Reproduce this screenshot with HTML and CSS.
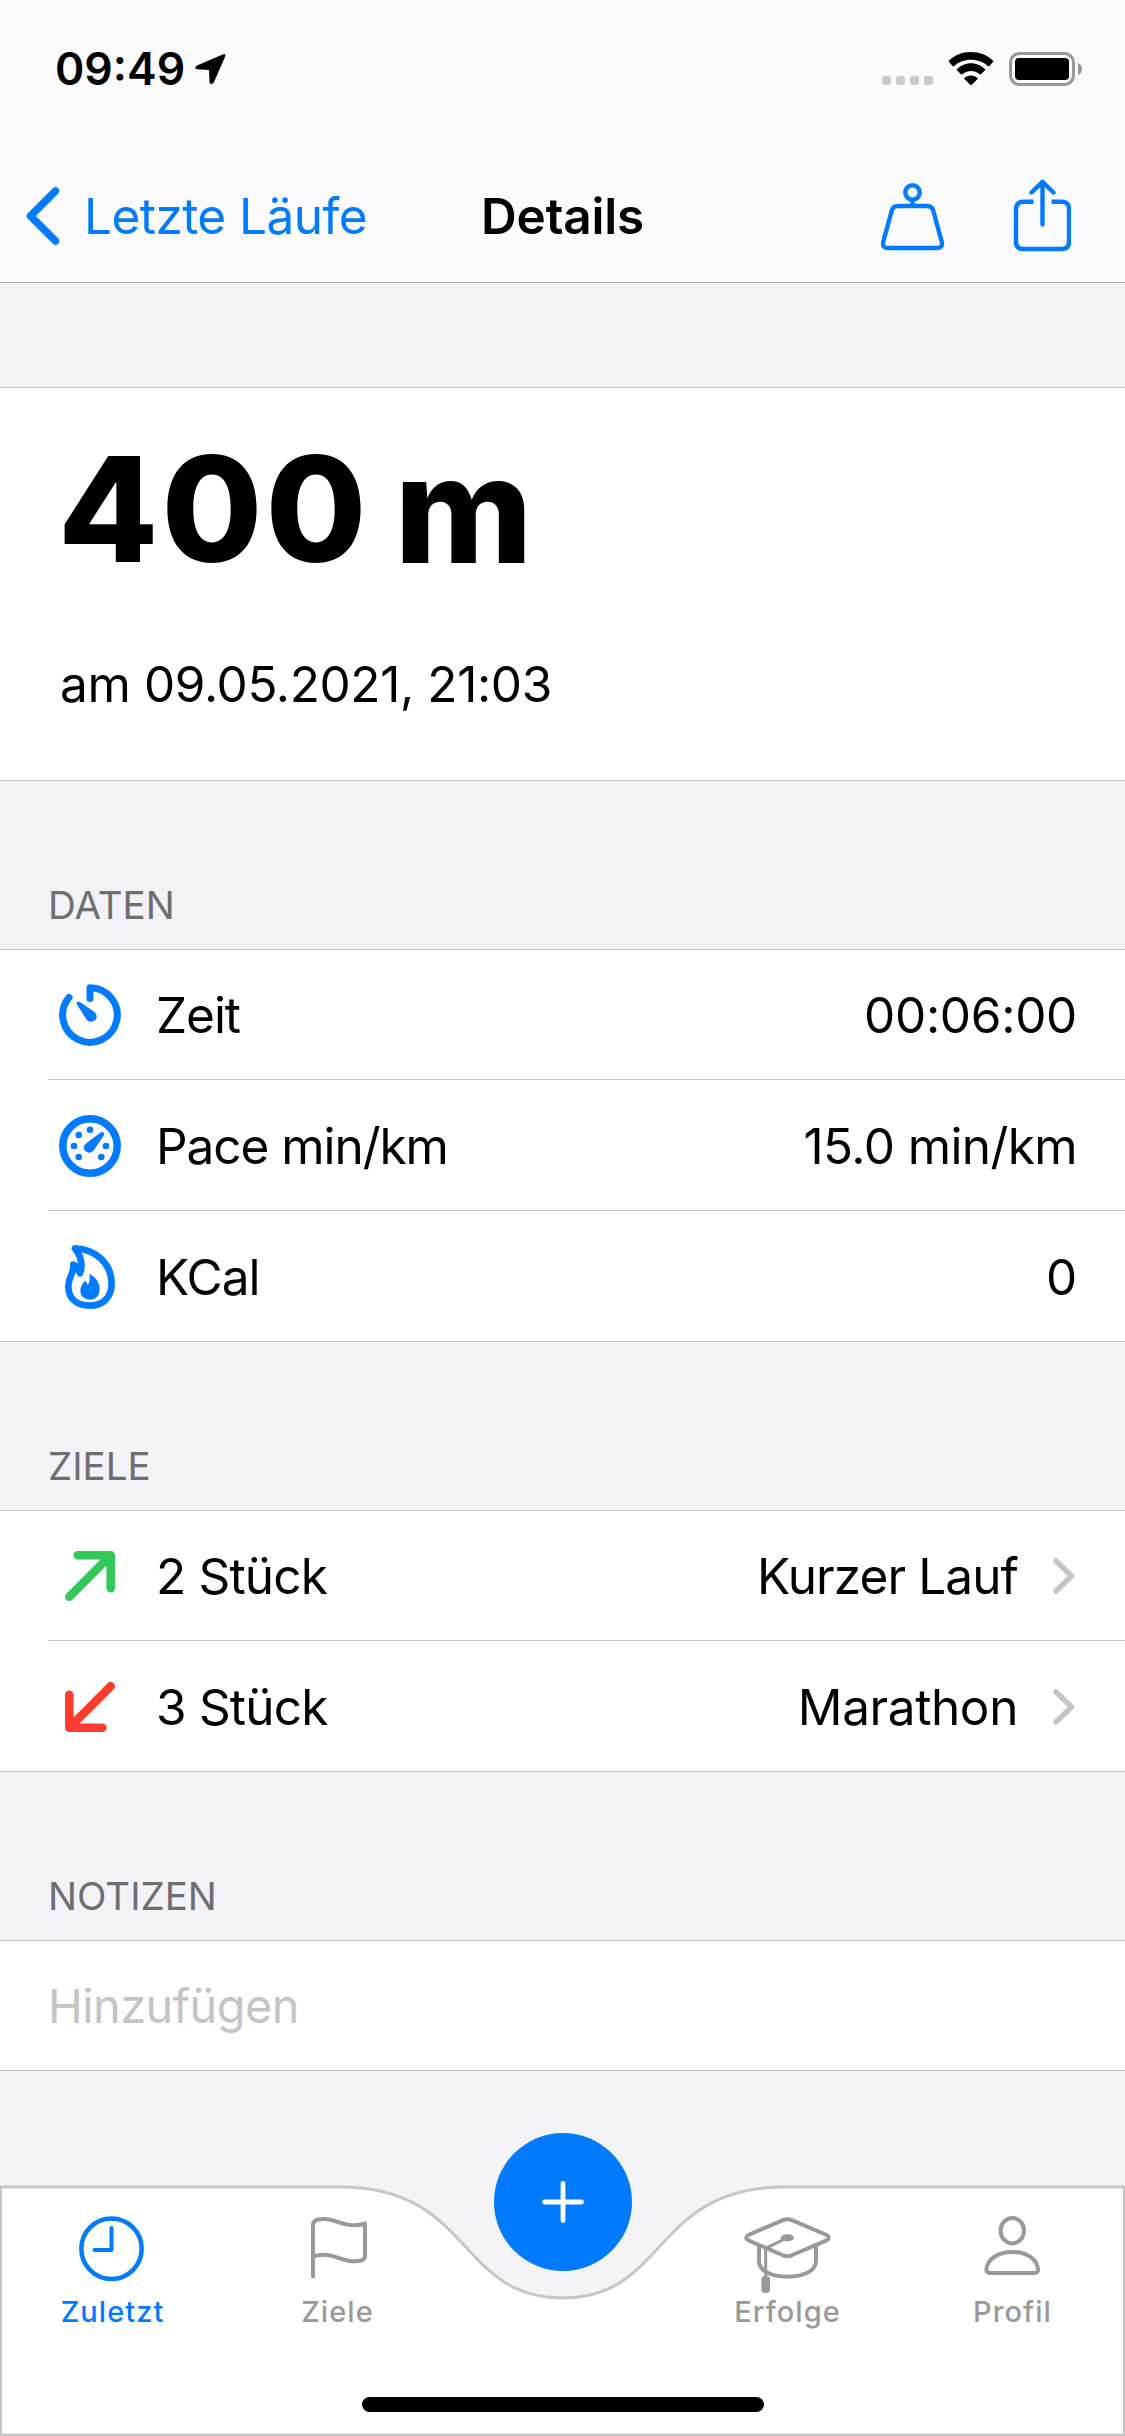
FILE: index.html
```html
<!DOCTYPE html>
<html lang="de">
<head>
<meta charset="utf-8">
<title>Details</title>
<link rel="stylesheet" href="styles.css">
</head>
<body>
<div class="screen">
  <header class="header">
    <div class="status">
      <div class="status-left">
        <span class="time">09:49</span>
        <svg class="location" width="32" height="32" viewBox="0 0 32 32"><path d="M30.5 1 Q32 1.500 31 4 L20 29 Q18.800 31.500 17 31 Q15.500 30.500 15.500 29 L15 17 L3 16.300 Q1.300 16 1.300 14.800 Q1.200 13.500 3 12.600 L28 1.700 Q29.500 1 30.500 1Z"/></svg>
      </div>
      <div class="status-right">
        <div class="cell"><i></i><i></i><i></i><i></i></div>
        <svg class="wifi" width="46" height="34" viewBox="0 0 46 34">
          <path d="M.5 9.300 C12-3 34-3 45.500 9.300 L41.500 14 Q40.700 14.600 40 14 C31 5.500 15 5.500 6 14 Q5.300 14.600 4.500 14Z"/>
          <path d="M8.500 17.700 C16 9 30 9 37.500 17.700 L33 22.200 Q32.300 22.800 31.500 22.100 C26.500 18 19.500 18 14.500 22.100 Q13.700 22.800 13 22.200Z"/>
          <path d="M16.400 26 C19.500 22.600 26.500 22.600 29.600 26 Q30 26.500 29.600 27 L23.700 32.700 Q23 33.400 22.300 32.700 L16.400 27 Q16 26.500 16.400 26Z"/>
        </svg>
        <svg class="battery" width="74" height="34" viewBox="0 0 74 34">
          <rect x="1.500" y="1.500" width="63" height="31" rx="9" fill="none" stroke="#98989a" stroke-width="3"/>
          <rect x="6" y="6" width="54" height="22" rx="4"/>
          <path d="M69 11 Q73 12.500 73 17 Q73 21.500 69 23Z" fill="#98989a"/>
        </svg>
      </div>
    </div>
    <nav class="nav">
      <a class="back">
        <svg width="34" height="58" viewBox="0 0 34 58"><path d="M29.500 4 L4.500 29 L29.500 54"/></svg>
        <span>Letzte Läufe</span>
      </a>
      <h1 class="nav-title">Details</h1>
      <div class="actions">
        <svg width="64" height="72" viewBox="0 0 64 72">
          <circle cx="31.500" cy="12.500" r="7.200"/>
          <path d="M31.500 20 V26 M17 26 H46 Q51 26 52.200 30.500 L60.800 62 Q61.800 68 56.500 68 H6.500 Q1.200 68 2.200 62 L10.800 30.500 Q12 26 17 26Z"/>
        </svg>
        <svg width="58" height="74" viewBox="0 0 58 74">
          <path d="M20.500 22.700 H10.500 Q3 22.700 3 30 V63 Q3 70 10.500 70 H48.500 Q56 70 56 63 V30 Q56 22.700 48.500 22.700 H38.500"/>
          <path d="M29.500 3 V45.500 M18.500 13.500 L29.500 2.800 L40.500 13.500" stroke-linecap="round"/>
        </svg>
      </div>
    </nav>
  </header>

  <main class="content">
    <section class="card summary">
      <p class="distance"><span class="number">400</span><span class="unit">m</span></p>
      <p class="date">am 09.05.2021, 21:03</p>
    </section>

    <h2 class="section-title">DATEN</h2>
    <section class="card">
      <div class="row">
        <div class="slot">
          <svg class="blue" width="62" height="62" viewBox="-31 -31 62 62">
            <path d="M0 -16.500 V-27.300 A27.300 27.300 0 1 1 -21 -17.500" fill="none" stroke="currentColor" stroke-width="7" stroke-linecap="round" stroke-linejoin="round"/>
            <path d="M-13.700 -11.500 Q-12.500 -14.600 -10 -13 L4.500 -3 Q8 0.500 6 4 Q3.500 7.500 -0.500 6.500 Q-2.500 6 -3.500 4.500Z" fill="currentColor"/>
          </svg>
        </div>
        <span class="label tight">Zeit</span><span class="value">00:06:00</span>
      </div>
      <div class="row">
        <div class="slot">
          <svg class="blue" width="62" height="62" viewBox="-31 -31 62 62">
            <circle r="27.200" fill="none" stroke="currentColor" stroke-width="7.500"/>
            <g fill="currentColor"><circle cy="-16.200" r="3.300"/><circle cx="-11.300" cy="-11" r="3.300"/><circle cx="-16" r="3.300"/><circle cx="-11.300" cy="11" r="3.300"/><circle cx="11.300" cy="11" r="3.300"/><circle cx="16" r="3.300"/>
            <path d="M10 -13 Q13 -15.200 14.200 -12.500 Q14.500 -11.500 13.800 -10.500 L4 4 Q1.500 7.300 -2 6.500 Q-6.500 5 -6.300 1 Q-6 -1 -4 -2.500Z"/></g>
          </svg>
        </div>
        <span class="label tight">Pace min/km</span><span class="value pace">15.0 min/km</span>
      </div>
      <div class="row">
        <div class="slot">
          <svg class="blue" width="50" height="64" viewBox="45 42 150 192">
            <path d="M75 52 C140 54 185 102 185 157 C185 201 157 224 120 224 C80 224 55 203 55 165 C55 137 73 128 70 101 Q84 107 90 127 Q103 88 75 52Z" fill="none" stroke="currentColor" stroke-width="20" stroke-linejoin="round"/>
            <path d="M118 128 Q149 145 149 174 Q148 205 120 206 Q91 205 91 178 Q91 165 105 149 Q112 154 113 163 Q122 149 118 128Z" fill="currentColor"/>
          </svg>
        </div>
        <span class="label tight">KCal</span><span class="value">0</span>
      </div>
    </section>

    <h2 class="section-title">ZIELE</h2>
    <section class="card">
      <div class="row">
        <div class="slot"><svg class="arrow up" width="50" height="50" viewBox="0 0 50 50"><path d="M4.300 45.700 L45.700 4.300 M12.700 4.300 H45.700 V37.300"/></svg></div>
        <span class="label">2 Stück</span><span class="value short">Kurzer Lauf</span>
        <svg class="chevron" width="24" height="36" viewBox="0 0 24 36"><path d="M3 3 L18.500 18 L3 33"/></svg>
      </div>
      <div class="row">
        <div class="slot"><svg class="arrow down" width="50" height="50" viewBox="0 0 50 50"><path d="M45.700 4.300 L4.300 45.700 M4.300 12.700 V45.700 H37.300"/></svg></div>
        <span class="label">3 Stück</span><span class="value marathon">Marathon</span>
        <svg class="chevron" width="24" height="36" viewBox="0 0 24 36"><path d="M3 3 L18.500 18 L3 33"/></svg>
      </div>
    </section>

    <h2 class="section-title">NOTIZEN</h2>
    <section class="card">
      <div class="row"><span class="placeholder">Hinzufügen</span></div>
    </section>
  </main>

  <footer class="tabbar">
    <svg class="tabbar-shape" width="1125" height="251" viewBox="0 0 1125 251"><path d="M.5 2 H340.500 C472.500 2 457.500 113 562.500 113 C667.500 113 652.500 2 784.500 2 H1124.500 V250 H.5Z"/></svg>
    <a class="tab active">
      <svg width="90" height="84" viewBox="0 0 90 84"><circle cx="43.500" cy="35.700" r="30.200" stroke-width="4.500"/><path d="M43.500 15 V37 H26.500"/></svg>
      <span>Zuletzt</span>
    </a>
    <a class="tab">
      <svg width="90" height="84" viewBox="0 0 90 84"><path d="M20 63.500 V12 Q20 6 30.500 6 C42.500 6 48.500 12.300 61 12.300 Q67.500 12.300 72 10.300 V43 Q72 48.300 61.500 48.300 C49.500 48.300 42.500 41.800 30.500 41.800 Q23.500 41.800 20 44"/></svg>
      <span>Ziele</span>
    </a>
    <button class="add" aria-label="Hinzufügen"><svg width="42" height="42" viewBox="0 0 42 42"><path d="M2.500 21 H39.500 M21 2.500 V39.500"/></svg></button>
    <a class="tab">
      <svg width="90" height="84" viewBox="0 0 90 84">
        <g transform="translate(-13 -8) scale(.33333)" stroke-width="12">
          <path d="M157 46 Q172 39 187 46 L290 90 Q302 98 290 106 L187 150 Q172 158 157 150 L55 106 Q42 98 55 90Z"/>
          <path d="M87 122 V168 C88 200 125 215 172 215 C219 215 257 200 258 168 V122"/>
          <path d="M172 98 L107 130 V220" stroke-width="9"/>
          <ellipse cx="172" cy="98" rx="20" ry="10.500" fill="currentColor" stroke="none"/>
          <rect x="94" y="213" width="26" height="51" rx="11" fill="currentColor" stroke="none"/>
        </g>
      </svg>
      <span>Erfolge</span>
    </a>
    <a class="tab">
      <svg width="90" height="84" viewBox="0 0 90 84"><ellipse cx="44.300" cy="17.700" rx="11.700" ry="12.700"/><path d="M22 60 Q18 60 18.500 55.500 C20 46 30 38.900 44.300 38.900 C58.600 38.900 68.600 46 70 55.500 Q70.500 60 66.500 60Z"/></svg>
      <span>Profil</span>
    </a>
    <div class="home"></div>
  </footer>
</div>
</body>
</html>
```
FILE: styles.css
```css
* { box-sizing: border-box; margin: 0; padding: 0; }
body { background: #f2f2f7; color: #000; font-family: Inter, "Liberation Sans", sans-serif; }
svg { display: block; flex: none; }

.screen { width: 1125px; height: 2436px; display: flex; flex-direction: column; overflow: hidden; }

.header { height: 283px; background: #fbfbfd; border-bottom: 1px solid #a9a9ad; }
.status { height: 150px; padding: 42px 42px 0 55px; display: flex; justify-content: space-between; }
.status-left { display: flex; }
.time { font-size: 44.5px; font-weight: 600; line-height: 54px; }
.location { margin: 11px 0 0 9px; }
.status-right { display: flex; align-items: flex-start; padding-top: 10px; }
.cell { display: flex; gap: 5px; padding-top: 24px; }
.cell i { width: 9px; height: 9px; border-radius: 3px; background: #c9c9cb; }
.wifi { margin-left: 15px; }
.battery { margin-left: 15px; }

.nav { height: 132px; display: grid; grid-template-columns: 1fr auto 1fr; align-items: center; }
.back { display: flex; align-items: center; color: #007aff; padding-left: 26px; gap: 24px; font-size: 49.5px; line-height: 60px; letter-spacing: -.55px; }
.back svg { fill: none; stroke: currentColor; stroke-width: 7.5; stroke-linecap: round; stroke-linejoin: round; }
.nav-title { font-size: 49.5px; font-weight: 600; line-height: 60px; letter-spacing: -.2px; }
.actions { display: flex; justify-content: flex-end; align-items: center; gap: 68px; padding-right: 54px; }
.actions svg { fill: none; stroke: #007aff; stroke-width: 4.4; stroke-linejoin: round; }

.content { flex: 1; padding-top: 104px; }
.card { background: #fff; border: solid #c6c6c8; border-width: 1px 0; }
.summary { height: 394px; padding: 41px 59px 0; }
.distance { display: flex; gap: 25px; font-size: 146px; font-weight: 800; line-height: 160px; }
.number { margin-left: -1px; letter-spacing: 3px; }
.unit { font-size: 149px; }
.date { margin: 65px 0 0 1px; font-size: 49.5px; line-height: 60px; letter-spacing: -.37px; }

.section-title { height: 168px; display: flex; align-items: flex-end; padding: 0 48px 21px; font-size: 38.5px; font-weight: 400; line-height: 46px; color: #6d6d72; }

.row { height: 131px; margin-left: 48px; padding: 2px 48px 0 0; display: flex; align-items: center; border-top: 1px solid #c6c6c8; font-size: 49.5px; line-height: 60px; }
.row:first-child { height: 129px; padding-top: 0; border-top: 0; }
.slot { width: 109px; padding-right: 25px; display: flex; justify-content: center; }
.label { flex: 1; margin-left: -1px; letter-spacing: -.8px; }
.tight { letter-spacing: -1.05px; }
.value { letter-spacing: -.3px; }
.value.pace { letter-spacing: -.6px; }
.value.short { letter-spacing: -.9px; }
.value.marathon { margin-right: -1px; letter-spacing: -.4px; }
.marathon + .chevron { margin-left: 36px; }
.blue { color: #007aff; }
.arrow { fill: none; stroke-width: 8.6; stroke-linecap: round; stroke-linejoin: round; }
.up { stroke: #34c759; }
.down { stroke: #ff3b30; }
.chevron { margin-left: 35px; fill: none; stroke: #c4c4c6; stroke-width: 5.5; stroke-linecap: round; stroke-linejoin: round; }
.placeholder { font-size: 46.8px; letter-spacing: -.5px; color: #c4c4c6; }

.tabbar { position: relative; height: 251px; display: grid; grid-template-columns: repeat(5, 225px); }
.tabbar-shape { position: absolute; inset: 0; fill: #fff; stroke: #c6c6c8; stroke-width: 3; }
.tab { position: relative; padding-top: 28px; display: flex; flex-direction: column; align-items: center; color: #999; font-size: 29px; font-weight: 500; line-height: 29px; letter-spacing: 1.05px; }
.tab svg { fill: none; stroke: currentColor; stroke-width: 4; stroke-linecap: round; stroke-linejoin: round; }
.active { color: #007aff; }
.add { position: relative; top: -52px; justify-self: center; width: 138px; height: 138px; border: 0; border-radius: 50%; background: #007aff; display: flex; align-items: center; justify-content: center; }
.add svg { fill: none; stroke: #fff; stroke-width: 4.8; stroke-linecap: round; }
.home { position: absolute; left: 362px; bottom: 24px; width: 402px; height: 15px; border-radius: 8px; background: #000; }
```
